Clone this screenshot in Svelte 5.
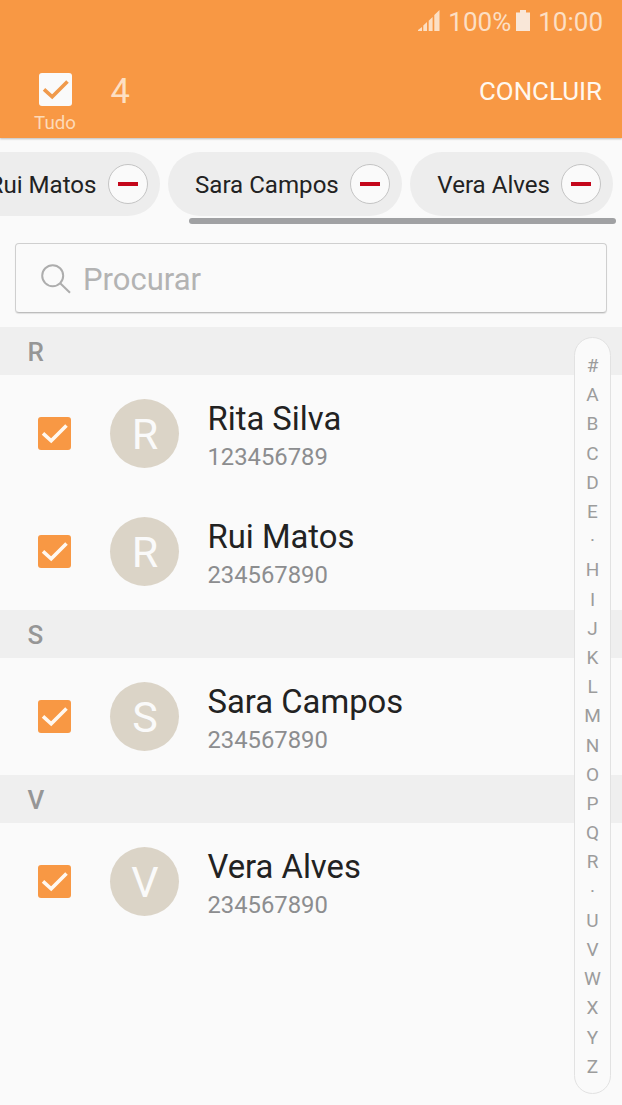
<script lang="ts">
	type Contact = { name: string; phone: string };
	type Section = { letter: string; contacts: Contact[] };

	const sections: Section[] = [
		{
			letter: 'R',
			contacts: [
				{ name: 'Rita Silva', phone: '123456789' },
				{ name: 'Rui Matos', phone: '234567890' }
			]
		},
		{ letter: 'S', contacts: [{ name: 'Sara Campos', phone: '234567890' }] },
		{ letter: 'V', contacts: [{ name: 'Vera Alves', phone: '234567890' }] }
	];

	const indexLetters = [...'#ABCDE·HIJKLMNOPQR·UVWXYZ'];
	const all = sections.flatMap((s) => s.contacts.map((c) => c.name));

	let selected = $state([...all]);
	let chips = $derived(selected.slice(-3));

	function toggle(name: string) {
		selected = selected.includes(name)
			? selected.filter((n) => n !== name)
			: all.filter((n) => n === name || selected.includes(n));
	}

	function toggleAll() {
		selected = selected.length === all.length ? [] : [...all];
	}
</script>

{#snippet tick()}
	<svg class="tick" viewBox="0 0 33 33" aria-hidden="true">
		<path d="M5 16.3 L13.2 23.8 L28.5 8.5" />
	</svg>
{/snippet}

<div class="screen">
	<header>
		<div class="status">
			<svg class="signal" viewBox="0 0 22 21" aria-hidden="true">
				<path d="M0 21V20L4 17V21zM5.3 21V15.5L9 12V21zM10.7 21V10.7L14.6 7V21zM16.3 21V5L21.5 0V21z" />
			</svg>
			<span class="percent">100%</span>
			<svg class="battery" viewBox="0 0 14 21" aria-hidden="true">
				<path d="M0 2.5H4V0H10V2.5H14V21H0z" />
			</svg>
			<span class="clock">10:00</span>
		</div>
		<div class="toolbar">
			<div class="all">
				<button
					class="check inverse"
					class:on={selected.length === all.length}
					onclick={toggleAll}
					aria-label="Tudo"
				>
					{@render tick()}
				</button>
				<span class="all-label">Tudo</span>
			</div>
			<span class="count">{selected.length}</span>
			<button class="done">CONCLUIR</button>
		</div>
	</header>

	<div class="chips">
		{#each chips as name (name)}
			<div class="chip">
				<span>{name}</span>
				<button class="remove" onclick={() => toggle(name)} aria-label={name}></button>
			</div>
		{/each}
	</div>
	<div class="scrollbar"></div>

	<div class="search">
		<svg viewBox="0 0 30 30" aria-hidden="true">
			<circle cx="11.7" cy="11.7" r="10.5" />
			<path d="M19.2 19.2L29 28.8" />
		</svg>
		<span>Procurar</span>
	</div>

	<main>
		{#each sections as section (section.letter)}
			<h2>{section.letter}</h2>
			{#each section.contacts as contact (contact.name)}
				<div class="row">
					<button
						class="check"
						class:on={selected.includes(contact.name)}
						onclick={() => toggle(contact.name)}
						aria-label={contact.name}
					>
						{@render tick()}
					</button>
					<div class="avatar">{contact.name[0]}</div>
					<div class="info">
						<span class="name">{contact.name}</span>
						<span class="phone">{contact.phone}</span>
					</div>
				</div>
			{/each}
		{/each}

		<nav>
			{#each indexLetters as letter}
				<span>{letter}</span>
			{/each}
		</nav>
	</main>
</div>

<style>
	:global(body) {
		background: #fafafa;
	}

	.screen {
		height: 1105px;
		overflow: hidden;
		font-family: Roboto, 'Liberation Sans', sans-serif;
		background: #fafafa;
		color: #222;
	}

	button {
		padding: 0;
		border: none;
		background: none;
		font: inherit;
		cursor: pointer;
	}

	header {
		height: 138px;
		background: #f89844;
		box-shadow: 0 1px 2px rgba(0, 0, 0, 0.25);
	}

	.status {
		display: flex;
		justify-content: flex-end;
		align-items: center;
		height: 43px;
		padding: 0 19px 1px 0;
		font-size: 26px;
		color: #fcdfc4;
	}

	.signal {
		width: 22px;
		height: 21px;
		margin: 0 8px 2px 0;
		fill: #fcdfc4;
	}

	.battery {
		width: 14px;
		height: 21px;
		margin: 0 8px 2px 5px;
		fill: #f9e7d8;
	}

	.toolbar {
		display: flex;
		align-items: flex-start;
		height: 94px;
		padding: 0 20px 0 34px;
	}

	.all {
		display: flex;
		flex-direction: column;
		align-items: center;
		width: 42px;
		padding-top: 29px;
	}

	.all-label {
		margin-top: 5px;
		font-size: 18.7px;
		line-height: 24px;
		color: #fddab8;
	}

	.count {
		flex: 1;
		margin-left: 34.5px;
		padding-top: 27px;
		font-size: 34.5px;
		line-height: 40px;
		color: #fde0c4;
	}

	.done {
		padding-top: 31px;
		font-size: 25.9px;
		line-height: 32px;
		color: #fff8f0;
	}

	.check {
		display: block;
		flex-shrink: 0;
		width: 33px;
		height: 33px;
		border-radius: 3px;
		background: #f89844;
	}

	.inverse {
		background: #fafafa;
	}

	.tick {
		display: block;
		width: 33px;
		height: 33px;
		fill: none;
		stroke: #fff8f0;
		stroke-width: 3.6;
		visibility: hidden;
	}

	.inverse .tick {
		stroke: #f09a4c;
	}

	.on .tick {
		visibility: visible;
	}

	.chips {
		display: flex;
		justify-content: flex-end;
		gap: 8px;
		height: 64px;
		padding: 14px 9px 0 0;
		overflow: hidden;
	}

	.chip {
		display: flex;
		flex-shrink: 0;
		align-items: center;
		gap: 11px;
		padding: 0 12px 0 27.5px;
		border-radius: 32px;
		background: #ededed;
		font-size: 24.1px;
		white-space: nowrap;
	}

	.chip span {
		padding-top: 1px;
	}

	.remove {
		display: flex;
		align-items: center;
		justify-content: center;
		box-sizing: border-box;
		width: 40px;
		height: 40px;
		border: 1px solid #c4c4c4;
		border-radius: 50%;
		background: #fafafa;
	}

	.remove::before {
		content: '';
		width: 20px;
		height: 4px;
		background: #c4071b;
	}

	.scrollbar {
		height: 6px;
		margin: 2px 6px 0 189px;
		border-radius: 3px;
		background: #a0a1a3;
	}

	.search {
		display: flex;
		align-items: center;
		box-sizing: border-box;
		height: 70px;
		margin: 19px 15px 14px;
		padding: 2px 25px 0;
		border: 1px solid #cfcfcf;
		border-bottom-color: #bdbdbd;
		border-radius: 4px;
		box-shadow: 0 1px 1px rgba(0, 0, 0, 0.1);
		font-size: 31px;
		color: #b3b3b3;
	}

	.search svg {
		width: 30px;
		height: 30px;
		margin-right: 12px;
		fill: none;
		stroke: #adadad;
		stroke-width: 2;
	}

	main {
		position: relative;
	}

	h2 {
		height: 48px;
		margin: 0;
		padding-left: 27.5px;
		background: #efefef;
		font-size: 26px;
		font-weight: 500;
		line-height: 50px;
		color: #969696;
	}

	.row {
		display: flex;
		align-items: center;
		height: 117.4px;
		padding-left: 38.4px;
	}

	.avatar {
		box-sizing: border-box;
		width: 69px;
		height: 69px;
		margin: 0 28px 0 39.1px;
		padding-top: 1px;
		border-radius: 50%;
		background: #dbd4c7;
		font-size: 43px;
		line-height: 69px;
		text-align: center;
		color: #fafafa;
	}

	.info {
		display: flex;
		flex-direction: column;
		padding-top: 7px;
	}

	.name {
		font-size: 32.8px;
		line-height: 40px;
	}

	.phone {
		font-size: 23.8px;
		line-height: 36px;
		color: #8c8d8f;
	}

	nav {
		position: absolute;
		top: 10px;
		right: 11px;
		display: flex;
		flex-direction: column;
		align-items: center;
		box-sizing: border-box;
		width: 37px;
		height: 757px;
		padding-top: 13px;
		border: 1px solid #e2e2e2;
		border-radius: 19px;
		background: #fafafa;
		font-size: 19px;
		line-height: 29.2px;
		color: #9c9c9c;
	}
</style>
